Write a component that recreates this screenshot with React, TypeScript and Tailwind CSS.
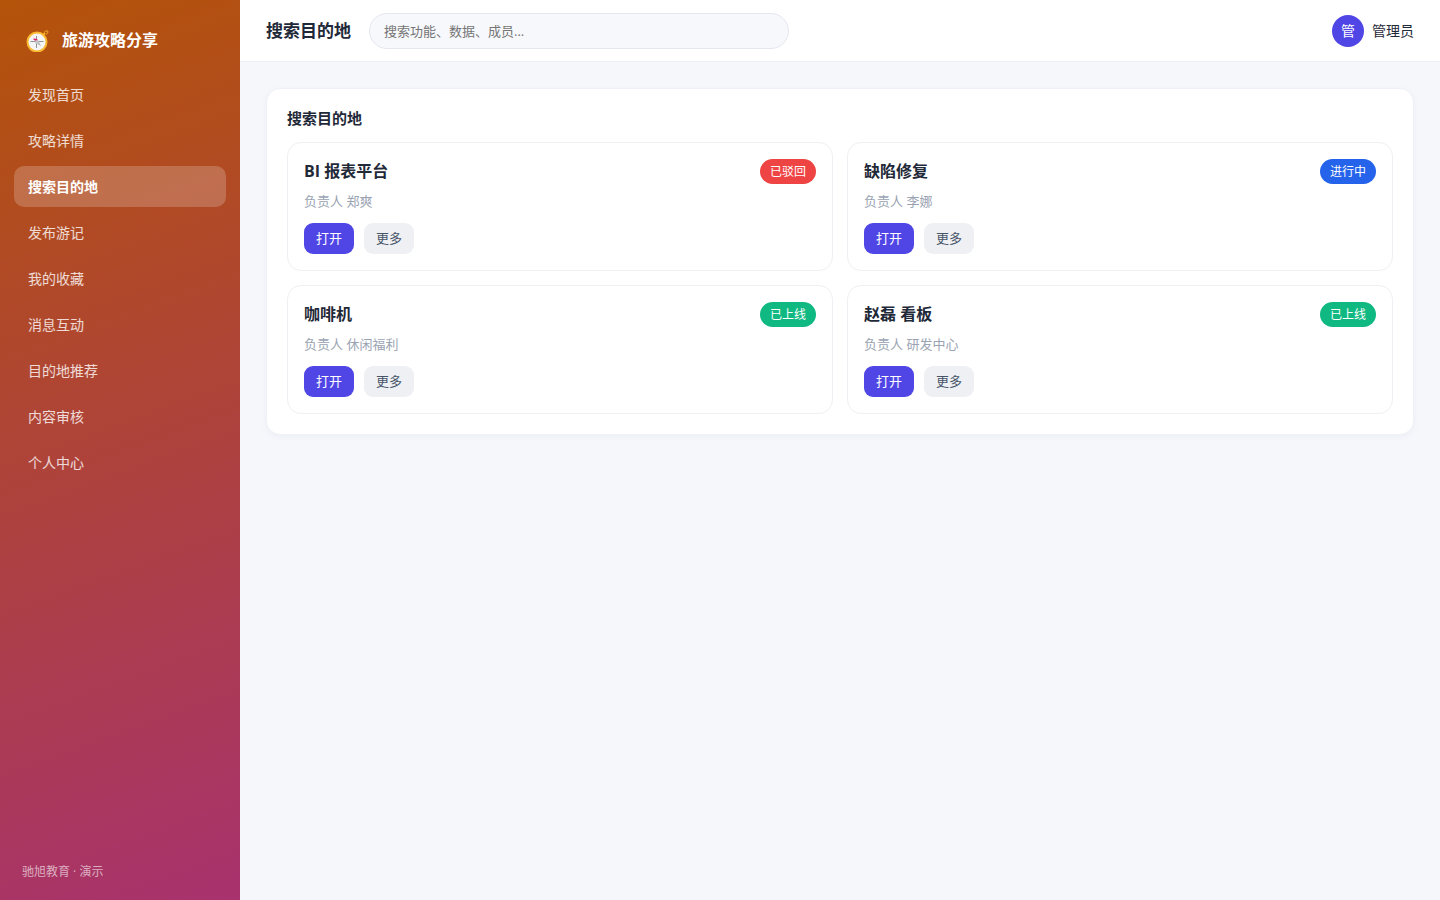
import clsx from 'clsx';

const navItems = [
  '发现首页',
  '攻略详情',
  '搜索目的地',
  '发布游记',
  '我的收藏',
  '消息互动',
  '目的地推荐',
  '内容审核',
  '个人中心',
];

const active = '搜索目的地';

const badgeColors = {
  已驳回: 'bg-[#ef4444]',
  进行中: 'bg-[#2563eb]',
  已上线: 'bg-[#10b981]',
};

type Result = {
  title: string;
  owner: string;
  status: keyof typeof badgeColors;
};

const results: Result[] = [
  { title: 'BI 报表平台', owner: '郑爽', status: '已驳回' },
  { title: '缺陷修复', owner: '李娜', status: '进行中' },
  { title: '咖啡机', owner: '休闲福利', status: '已上线' },
  { title: '赵磊 看板', owner: '研发中心', status: '已上线' },
];

const Compass = () => (
  <svg width="24" height="24" viewBox="0 0 24 24" fill="none" aria-hidden="true">
    <path d="M17.5 6.5l1.500-1.500" stroke="#f5b52e" strokeWidth="2" />
    <path d="M18.500 4.500l.8-1.500h2.500v2l-1.800 1.500" stroke="#f0a92b" strokeWidth="1" />
    <circle cx="11" cy="14" r="9.500" fill="#f5f5f5" stroke="#fbb931" strokeWidth="2" />
    <path d="M10.500 8v12M4.500 13.500h13" stroke="#8f9396" strokeWidth="1" />
    <path d="M7 11l1-.5 3 .5 1 1.500-2 1z" fill="#e0226a" />
    <path d="M15 18l-4.500-2.500 2-2.500z" fill="#aeb3b6" />
    <circle cx="11" cy="14" r="2" fill="#c4c6c8" />
  </svg>
);

const Sidebar = () => (
  <aside className="w-60 shrink-0 flex flex-col px-[14px] py-5 bg-[linear-gradient(160deg,#b45309,#a8326e)] text-white">
    <div className="flex items-center gap-3 px-3 h-10 text-base font-bold">
      <Compass />
      <span>旅游攻略分享</span>
    </div>
    <nav className="flex flex-col gap-[5px] mt-[14px]">
      {navItems.map((item) => (
        <a
          key={item}
          href="#"
          className={clsx(
            'px-[14px] py-[10px] rounded-[10px] text-sm leading-[21px]',
            item === active ? 'bg-white/20 font-bold' : 'text-white/80'
          )}
        >
          {item}
        </a>
      ))}
    </nav>
    <div className="mt-auto px-2 text-xs leading-4 text-white/60">
      驰旭教育 · 演示
    </div>
  </aside>
);

const Header = () => (
  <header className="flex items-center gap-[18px] px-[26px] h-[62px] bg-white border-b border-[#eceef3]">
    <h1 className="text-[17px] font-bold">{active}</h1>
    <input
      type="search"
      aria-label="搜索"
      placeholder="搜索功能、数据、成员..."
      className="w-[420px] h-9 px-[14px] rounded-full border border-[#e5e7ef] bg-[#f7f8fc] text-[13px] placeholder:text-[#757575]"
    />
    <div className="flex items-center gap-2 ml-auto text-sm">
      <span className="flex items-center justify-center w-8 h-8 rounded-full bg-[#4f46e5] text-white">
        管
      </span>
      <span>管理员</span>
    </div>
  </header>
);

const ResultCard = ({ title, owner, status }: Result) => (
  <article className="p-4 rounded-[14px] border border-[#eef0f3]">
    <div className="flex items-center justify-between">
      <h3 className="text-base leading-[25px] font-bold">{title}</h3>
      <span
        className={clsx(
          'px-[10px] rounded-full text-xs leading-[25px] text-white',
          badgeColors[status]
        )}
      >
        {status}
      </span>
    </div>
    <p className="mt-2 text-[13px] leading-[19px] text-[#9aa3b2]">
      负责人 {owner}
    </p>
    <div className="flex gap-[10px] mt-3 text-[13px] leading-[31px]">
      <button className="px-3 rounded-[9px] bg-[#4f46e5] text-white">
        打开
      </button>
      <button className="px-3 rounded-[9px] bg-[#eef0f4] text-[#475569]">
        更多
      </button>
    </div>
  </article>
);

const App = () => {
  return (
    <div className="flex min-h-screen bg-[#f5f7fb] text-[#1f2937] font-['Open_Sans','Noto_Sans_CJK_SC',sans-serif]">
      <Sidebar />
      <div className="flex-1 min-w-0">
        <Header />
        <main className="p-[26px]">
          <section className="p-5 bg-white rounded-[14px] border border-[#eff1f6] shadow-[0_2px_6px_rgba(30,41,90,0.04)]">
            <h2 className="mb-[14px] text-[15px] leading-[19px] font-bold">
              {active}
            </h2>
            <div className="grid grid-cols-2 gap-[14px]">
              {results.map((result) => (
                <ResultCard key={result.title} {...result} />
              ))}
            </div>
          </section>
        </main>
      </div>
    </div>
  );
};

export default App;
